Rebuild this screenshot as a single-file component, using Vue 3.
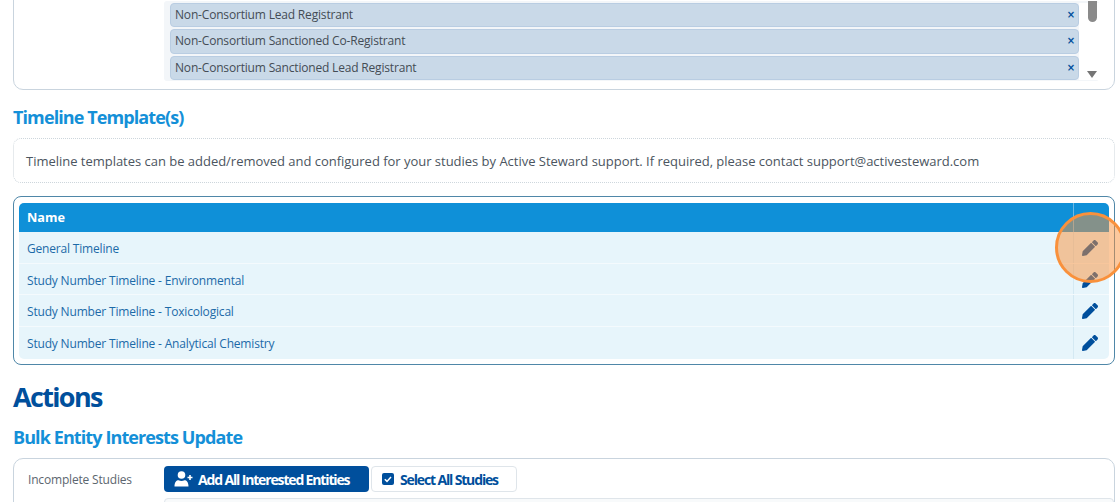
<script setup>
const tags = ['Non-Consortium Lead Registrant', 'Non-Consortium Sanctioned Co-Registrant', 'Non-Consortium Sanctioned Lead Registrant']
const rows = ['General Timeline', 'Study Number Timeline - Environmental', 'Study Number Timeline - Toxicological', 'Study Number Timeline - Analytical Chemistry']
const pencil = 'M497.900 142.100l-46.100 46.100c-4.700 4.700-12.300 4.700-17 0l-111-111c-4.700-4.700-4.700-12.300 0-17l46.100-46.100c18.700-18.700 49.100-18.700 67.900 0l60.100 60.100c18.800 18.700 18.800 49.100 0 67.900zM284.200 99.800L21.600 362.400.400 483.900c-2.900 16.400 11.400 30.600 27.800 27.800l121.500-21.300 262.600-262.600c4.700-4.700 4.700-12.300 0-17l-111-111c-4.800-4.700-12.400-4.700-17.100 0z'
</script>

<template>
  <div class="page">
    <section class="card top">
      <div class="picker">
        <div class="tags">
          <div v-for="t in tags" :key="t" class="tag"><span>{{ t }}</span><b>×</b></div>
        </div>
        <div class="scroll">
          <div class="thumb"></div>
          <div class="arrow"></div>
        </div>
      </div>
    </section>

    <h3 class="sub first">Timeline Template(s)</h3>
    <div class="note">Timeline templates can be added/removed and configured for your studies by Active Steward support. If required, please contact support@activesteward.com</div>

    <div class="frame">
      <div class="head"><div class="name">Name</div><div class="act"></div></div>
      <div v-for="r in rows" :key="r" class="row">
        <div class="name">{{ r }}</div>
        <div class="act">
          <svg width="16" height="16" viewBox="0 0 512 512"><path :d="pencil" /></svg>
        </div>
      </div>
    </div>

    <h2 class="title">Actions</h2>
    <h3 class="sub second">Bulk Entity Interests Update</h3>

    <section class="card bottom">
      <div class="label">Incomplete Studies</div>
      <div class="controls">
        <div class="buttons">
          <div class="btn primary">
            <svg width="20" height="16" viewBox="0 0 20 16"><circle cx="7.500" cy="4" r="3.800" fill="#fff"/><path d="M0.500 15.500c0-4.500 2-6.300 4-6.300 1 .5 2 .8 3 .8s2-.3 3-.8c2 0 4 1.800 4 6.300z" fill="#fff"/><path d="M16 4v5M13.500 6.500h5" stroke="#fff" stroke-width="1.600"/></svg>
            Add All Interested Entities
          </div>
          <div class="btn plain">
            <svg width="12" height="12" viewBox="0 0 12 12"><rect width="12" height="12" rx="2" fill="#004f9c"/><path d="M2.800 6.200l2.200 2.200 4-4.400" fill="none" stroke="#fff" stroke-width="1.500"/></svg>
            Select All Studies
          </div>
        </div>
        <div class="box"></div>
      </div>
    </section>

    <div class="spot"></div>
  </div>
</template>

<style scoped>
.page { position: relative; width: 1120px; height: 502px; overflow: hidden; background: #fff; font-family: "Open Sans", sans-serif; color: #4b5560; font-size: 12px; letter-spacing: -0.180px; padding: 0 5px 0 13px; box-sizing: border-box; }
.card { border: 1px solid #c9d4de; border-radius: 10px; box-sizing: border-box; background: #fff; }
.top { height: 100px; margin-top: -10px; padding: 10px 0 8px 150px; display: flex; }
.picker { flex: 1; display: flex; margin-right: 15px; background: #f3f6f9; border-radius: 3px; padding: 1.500px 0 1px 6px; }
.tags { flex: 1; display: flex; flex-direction: column; gap: 2px; }
.tag { height: 24.500px; box-sizing: border-box; border: 1px solid #b9cde2; border-radius: 4px; background: #c9d9e8; color: #444c55; padding: 0 3px 0 4px; display: flex; align-items: center; justify-content: space-between; line-height: 20px; }
.tag b { color: #004f9c; font-size: 10px; font-weight: 700; font-family: "DejaVu Sans", sans-serif; }
.scroll { width: 20px; display: flex; flex-direction: column; justify-content: space-between; align-items: center; background: #fff; padding: 0 0 2px 6px; box-sizing: border-box; }
.thumb { width: 9px; height: 21px; margin-top: -2px; background: #8a8a8a; border-radius: 0 0 5px 5px; }
.arrow { width: 0; height: 0; border-left: 5px solid transparent; border-right: 5px solid transparent; border-top: 7px solid #757575; }
.sub { margin: 0; color: #1490d8; font-size: 18px; font-weight: 700; letter-spacing: -0.900px; line-height: 24px; }
.first { margin-top: 15px; }
.note { margin-top: 9px; height: 45px; box-sizing: border-box; border: 1px dotted #cdd6dc; border-radius: 8px; padding: 0 12px; display: flex; align-items: center; font-size: 13px; letter-spacing: -0.020px; color: #4b5560; }
.frame { margin-top: 13px; height: 169px; box-sizing: border-box; border: 1px solid #4f87a8; border-radius: 8px; padding: 6px 5px; }
.head, .row { display: flex; }
.head { height: 29px; background: #0f90d8; color: #fff; font-weight: 700; font-size: 12.700px; letter-spacing: 0; border-radius: 5px 5px 0 0; line-height: 29px; }
.row { height: 31.700px; box-sizing: border-box; background: #e7f5fb; color: #1c6aa8; align-items: center; border-bottom: 1px solid #f4fafd; }
.row:last-child { border-bottom: 0; border-radius: 0 0 5px 5px; }
.row .name { padding-top: 2px; }
.row .act { padding-top: 1px; }
.name { flex: 1; padding-left: 8px; }
.act { width: 36px; align-self: stretch; border-left: 1px solid #d4e9f3; display: flex; align-items: center; padding-left: 8px; box-sizing: border-box; }
.head .act { border-left-color: #6cb8e4; }
.act svg { fill: #004f9c; }
.title { margin: 14px 0 0; color: #004f9c; font-size: 27px; font-weight: 700; letter-spacing: -1.650px; line-height: 36px; }
.second { margin-top: 10px; }
.bottom { margin-top: 9px; height: 70px; display: flex; padding: 7px 0 0 14px; }
.label { width: 136px; line-height: 27px; color: #5c666f; }
.controls { flex: 1; }
.buttons { display: flex; gap: 2px; }
.btn { height: 26px; box-sizing: border-box; border-radius: 4px; display: flex; align-items: center; font-weight: 700; font-size: 14px; letter-spacing: -1.150px; }
.primary { width: 205px; background: #004f9c; color: #fff; padding-left: 10px; gap: 4px; }
.plain { width: 146px; border: 1px solid #dfe5ea; background: #fff; color: #004f9c; padding-left: 10px; gap: 6px; }
.box { margin-top: 6px; height: 30px; border: 1px solid #dfe5ea; border-radius: 4px; background: #f8fafb; }
.spot { position: absolute; left: 1055px; top: 212px; width: 71px; height: 71px; box-sizing: border-box; border: 3px solid #f9913c; border-radius: 50%; background: rgba(249, 145, 60, 0.5); }
</style>
